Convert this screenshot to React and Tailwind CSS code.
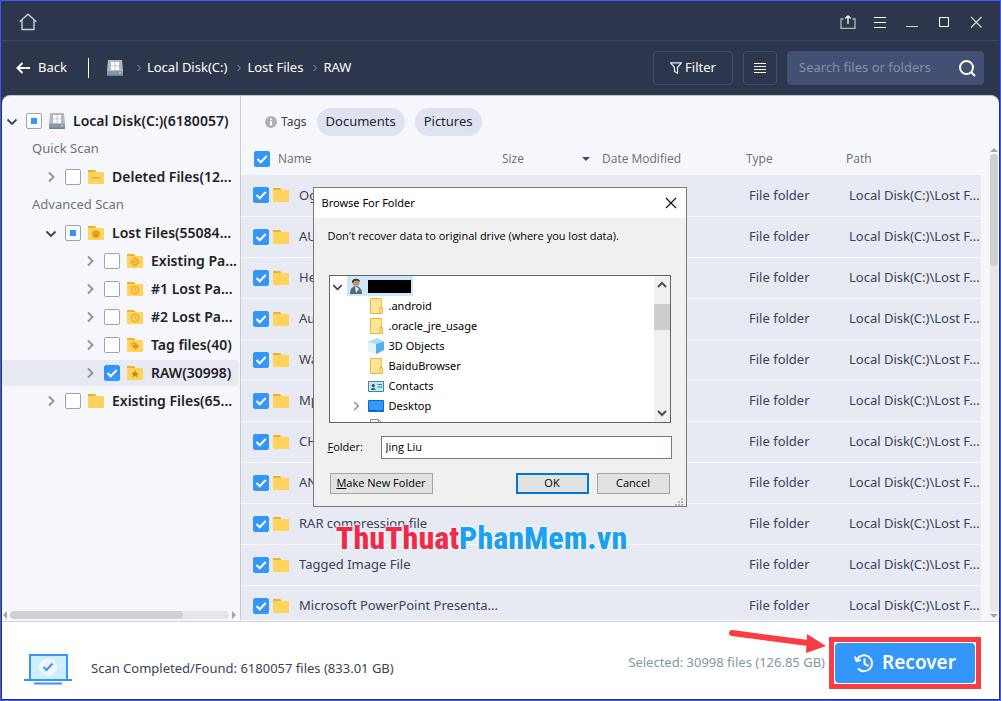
import React, { useState } from 'react';

const treeItems = [
  { label: 'Local Disk(C:)(6180057)', level: 0, open: true, state: 'partial', icon: 'disk' },
  { section: 'Quick Scan' },
  { label: 'Deleted Files(12...', level: 1, state: 'off', icon: 'minus' },
  { section: 'Advanced Scan' },
  { label: 'Lost Files(55084...', level: 1, open: true, state: 'partial', icon: 'smile' },
  { label: 'Existing Pa...', level: 2, state: 'off', icon: 'target' },
  { label: '#1 Lost Pa...', level: 2, state: 'off', icon: 'clock' },
  { label: '#2 Lost Pa...', level: 2, state: 'off', icon: 'clock' },
  { label: 'Tag files(40)', level: 2, state: 'off', icon: 'tag' },
  { label: 'RAW(30998)', level: 2, state: 'on', icon: 'star', active: true },
  { label: 'Existing Files(65...', level: 1, state: 'off', icon: 'plain' },
];

const files = [
  'Ogg', 'AU', 'Help', 'Au', 'Wav', 'Mp3', 'CHM', 'ANI',
  'RAR compression file', 'Tagged Image File', 'Microsoft PowerPoint Presenta...',
];

const folders = [
  { name: '.android', icon: 'folder' },
  { name: '.oracle_jre_usage', icon: 'folder' },
  { name: '3D Objects', icon: 'cube' },
  { name: 'BaiduBrowser', icon: 'folder' },
  { name: 'Contacts', icon: 'contacts' },
  { name: 'Desktop', icon: 'desktop', expandable: true },
  { name: 'Documents', icon: 'doc' },
];

const indent = ['pl-[2px]', 'pl-[41px]', 'pl-[80px]'];

const Tick = ({ state, label }) => {
  const [value, setValue] = useState(state);
  return (
    <span className="grid size-4 shrink-0">
      <input
        type="checkbox"
        aria-label={label}
        checked={value === 'on'}
        onChange={() => setValue(value === 'on' ? 'off' : 'on')}
        className="col-start-1 row-start-1 size-4 appearance-none rounded-[2px] border border-[#a0a3a9] bg-white checked:border-[#3296fa] checked:bg-[#3296fa]"
      />
      <svg viewBox="0 0 16 16" className="pointer-events-none col-start-1 row-start-1 size-4">
        {value === 'on' && <path d="M3.5 8l3.2 3.2 6-6.2" fill="none" stroke="#fff" strokeWidth="2" />}
        {value === 'partial' && <rect x="5" y="5" width="6" height="6" fill="#3296fa" />}
      </svg>
    </span>
  );
};

const Chevron = ({ open, className }) => (
  <svg viewBox="0 0 16 16" className={className} fill="none" strokeWidth="1.8">
    {open ? <path d="M3.5 6.5L8 11l4.5-4.5" stroke="#3b4256" /> : <path d="M6 3.5L10.5 8 6 12.5" stroke="#8f9297" />}
  </svg>
);

const Disk = () => (
  <svg viewBox="0 0 16 16" className="size-4 shrink-0">
    <path d="M1 0h14l1 11H0z" fill="#b4b8be" />
    <path d="M0 11h16v5H0z" fill="#8699a8" />
    <path d="M0 14.5h16V16H0z" fill="#6d8294" />
    <path d="M4 2h3.6v3.5H4zM8.4 2H12v3.5H8.4zM4 6.3h3.6V10H4zM8.4 6.3H12V10H8.4z" fill="#fff" />
    <path d="M12 12.5h2v1h-2z" fill="#bfe6f5" />
  </svg>
);

const Folder = ({ mark }) => (
  <svg viewBox="0 0 16 16" className="size-4 shrink-0" fill="none" stroke="#e2a51c">
    <path d="M0 1h7l1.5 2H15v4H0z" fill="#f0b323" stroke="none" />
    <rect y="3" width="16" height="12" rx="0.6" fill="#ffd35c" stroke="none" />
    {mark === 'minus' && <path d="M4 8.8h8" stroke="#b5892a" strokeDasharray="2 0.6" />}
    {mark === 'smile' && <><circle cx="8" cy="9" r="3.6" fill="#e9ad27" /><path d="M6.5 8h.8M9 8h.8M6.5 10.3q1.5 1 3 0" stroke="#a8791a" /></>}
    {mark === 'target' && <><path d="M8 4.3L12.7 9 8 13.7 3.3 9z" /><circle cx="8" cy="9" r="2.6" /><circle cx="8" cy="9" r="0.7" fill="#e2a51c" /></>}
    {mark === 'clock' && <><circle cx="8" cy="9" r="4" /><path d="M8 6.5V9l2 1.4" /></>}
    {mark === 'tag' && <><path d="M5 6h3.5l3.3 3.4-3 3L5 9z" fill="#dca01d" /><circle cx="6.6" cy="7.4" r="0.6" fill="#fff0b8" stroke="none" /></>}
    {mark === 'star' && <path d="M8 5l1.2 2.7 2.9.2-2.2 1.9.8 2.9L8 11.1l-2.7 1.6.8-2.9-2.2-1.9 2.9-.2z" fill="#c58c17" stroke="none" />}
  </svg>
);

const ShellIcon = ({ icon }) => (
  <svg viewBox="0 0 16 16" className="size-4 shrink-0">
    {icon === 'folder' && <><path d="M2.5.5h10.8v15H2.5z" fill="#ffe597" stroke="#f0b23e" /><path d="M12 9.5h2.5v6H12z" fill="#ffe597" stroke="#f0b23e" /></>}
    {icon === 'cube' && <><path d="M0 3.5L9 0l7 3v9l-7 4-9-3z" fill="#a8e2f7" /><path d="M0 4l8 2v10l-8-3.5z" fill="#e3f3fb" /><path d="M8 6l8-2.5V12l-8 4z" fill="#58aee8" /></>}
    {icon === 'contacts' && <><path d="M.5 3.5h15v10H.5z" fill="#b8ecf8" stroke="#5c7f94" /><path d="M3 12c0-3 4.5-3 4.5 0z" fill="#3a5c78" /><circle cx="5.3" cy="7.5" r="1.6" fill="#4a4038" /><path d="M9.5 6.5H14M9.5 9H14" stroke="#2d7fb8" /></>}
    {icon === 'desktop' && <><path d="M.5 2.5h15v11H.5z" fill="#3399ff" stroke="#0b6cc4" /><path d="M1 12.5h14" stroke="#1559a0" strokeDasharray="8 1 1 1" /></>}
    {icon === 'doc' && <><path d="M2.5 1.5h8l3 3v11h-11z" fill="#f6f8fa" stroke="#8b9299" /><path d="M5 4h4v3H5z" fill="#5aa5d8" /><path d="M10.5 1.5v3h3" fill="none" stroke="#8b9299" /></>}
  </svg>
);

const TitleBar = () => (
  <div className="flex h-10 shrink-0 items-center justify-between border-b border-[#3d465c] pl-[17px] pr-[15px] pt-[2px] text-white">
    <button aria-label="Home">
      <svg viewBox="0 0 18 18" className="size-[18px]" fill="none" stroke="#cfd2d8" strokeWidth="1.4">
        <path d="M.7 8.8L9 1.2l8.3 7.6M3 7v9.500h12V7" />
      </svg>
    </button>
    <div className="flex items-center gap-4">
      <button aria-label="Export">
        <svg viewBox="0 0 16 16" className="size-4" fill="none" stroke="#a9bccb" strokeWidth="1.3">
          <path d="M3.5 5H1v9.300h14V5h-2.500" />
          <path d="M8 10V2M5.3 4.500L8 1.800l2.700 2.700" stroke="#fff" />
        </svg>
      </button>
      <button aria-label="Menu">
        <svg viewBox="0 0 16 16" className="size-4" stroke="#fff">
          <path d="M2 3.500h12M2 8.500h12M2 13.500h12" />
        </svg>
      </button>
      <button aria-label="Minimize">
        <svg viewBox="0 0 16 16" className="size-4" stroke="#d5d7dc">
          <path d="M2 12.500h12" />
        </svg>
      </button>
      <button aria-label="Maximize">
        <svg viewBox="0 0 16 16" className="size-4" fill="none" stroke="#fff">
          <path d="M3.500 3.500h9v9h-9z" />
        </svg>
      </button>
      <button aria-label="Close">
        <svg viewBox="0 0 16 16" className="size-4" stroke="#d5d7dc" strokeWidth="1.2">
          <path d="M3 3l10.500 10.500M13.500 3L3 13.500" />
        </svg>
      </button>
    </div>
  </div>
);

const CrumbArrow = () => (
  <svg viewBox="0 0 8 8" className="ml-2 mr-1 size-2" fill="none" stroke="#8c97ad">
    <path d="M2.500 1l3 3-3 3" />
  </svg>
);

const Toolbar = () => (
  <div className="flex h-[54px] shrink-0 items-center justify-between pl-[14px] pr-[15px] text-white">
    <div className="flex items-center">
      <button className="flex items-center gap-2">
        <svg viewBox="0 0 14 12" className="h-3 w-[14px]" fill="none" stroke="#fff" strokeWidth="2">
          <path d="M14 6H1.500M6.500 1l-5 5 5 5" />
        </svg>
        Back
      </button>
      <span className="ml-[21px] mr-[18px] h-5 w-px bg-white" />
      <Disk />
      <nav className="ml-1 flex items-center">
        <CrumbArrow />
        <a href="#disk">Local Disk(C:)</a>
        <CrumbArrow />
        <a href="#lost">Lost Files</a>
        <CrumbArrow />
        <a href="#raw">RAW</a>
      </nav>
    </div>
    <div className="flex gap-[10px]">
      <button className="flex h-[34px] w-20 items-center justify-center gap-[3px] rounded border border-[#414e70]">
        <svg viewBox="0 0 12 12" className="size-3" fill="none" stroke="#e8eaf0" strokeWidth="1.2">
          <path d="M.7.8h10.6L7.500 5.500v5.700L4.500 9.500v-4z" />
        </svg>
        Filter
      </button>
      <button aria-label="List view" className="flex h-[34px] w-[34px] items-center justify-center rounded border border-[#414e70]">
        <svg viewBox="0 0 12 12" className="size-3" stroke="#fff">
          <path d="M0 1.500h12M0 4.500h12M0 7.500h12M0 10.500h12" />
        </svg>
      </button>
      <div className="flex h-[34px] w-[197px] items-center rounded bg-[#435073] pl-3 pr-2">
        <input aria-label="Search" placeholder="Search files or folders" className="min-w-0 flex-1 bg-transparent outline-none placeholder:text-[#7f92ad]" />
        <svg viewBox="0 0 18 18" className="size-[18px] shrink-0" fill="none" stroke="#fff" strokeWidth="2">
          <circle cx="8.500" cy="8.500" r="6.500" />
          <path d="M13 13l4 4" />
        </svg>
      </div>
    </div>
  </div>
);

const Sidebar = () => (
  <aside className="flex w-[239px] shrink-0 flex-col border-r border-[#c9ccd3] pt-[11px]">
    <ul className="flex flex-1 flex-col">
      {treeItems.map((item, idx) => item.section ? (
        <li key={idx} className="my-px flex h-[26px] items-center pl-[30px] text-[#6f7478]">{item.section}</li>
      ) : (
        <li key={idx} className={`my-px mr-px flex h-[26px] items-center rounded ${indent[item.level]} ${item.active ? 'bg-[#e7e9f3]' : ''}`}>
          <Chevron open={item.open} className="mr-[6px] size-4 shrink-0" />
          <Tick state={item.state} label={item.label} />
          <span className="ml-[7px] mr-2">{item.icon === 'disk' ? <Disk /> : <Folder mark={item.icon} />}</span>
          <span className="whitespace-nowrap text-sm font-semibold text-[#1f2124]">{item.label}</span>
        </li>
      ))}
    </ul>
    <div className="flex h-[11px] items-center pr-[3px]">
      <svg viewBox="0 0 8 8" className="size-2"><path d="M5 0v8L1 4z" fill="#a3a5a9" /></svg>
      <div className="flex h-2 flex-1 rounded-full bg-[#e6e6e8]">
        <div className="w-[79%] rounded-full bg-[#cfd0d2]" />
      </div>
      <svg viewBox="0 0 8 8" className="size-2"><path d="M3 0v8l4-4z" fill="#a3a5a9" /></svg>
    </div>
  </aside>
);

const FileTable = () => (
  <table className="w-full table-fixed border-collapse text-left">
    <colgroup>
      <col />
      <col className="w-[100px]" />
      <col className="w-[144px]" />
      <col className="w-[100px]" />
      <col className="w-[138px]" />
    </colgroup>
    <thead>
      <tr className="h-[33px] font-['Open_Sans',sans-serif] text-xs text-[#6a706f]">
        <th className="font-normal">
          <div className="flex items-center gap-2 pl-[13px]"><Tick state="on" label="Select all" />Name</div>
        </th>
        <th className="px-[3px] font-normal">
          <div className="flex items-center justify-between pr-[6px]">
            Size
            <svg viewBox="0 0 8 4" className="h-1 w-2"><path d="M0 0h8L4 4z" fill="#3d4870" /></svg>
          </div>
        </th>
        <th className="px-[3px] font-normal">Date Modified</th>
        <th className="px-[3px] font-normal">Type</th>
        <th className="px-[3px] font-normal">Path</th>
      </tr>
    </thead>
    <tbody>
      {files.map((name) => (
        <tr key={name} className="h-[41px] border-b border-[#f5f7fc] bg-[#e7e9f3] text-[#3b4256]">
          <td>
            <div className="flex items-center whitespace-nowrap pl-3">
              <Tick state="on" label={name} />
              <span className="ml-1 mr-[10px]"><Folder /></span>
              {name}
            </div>
          </td>
          <td />
          <td />
          <td className="whitespace-nowrap px-[6px]">File folder</td>
          <td className="whitespace-nowrap pl-[6px]">Local Disk(C:)\Lost F...</td>
        </tr>
      ))}
    </tbody>
  </table>
);

const VerticalScroll = () => (
  <div className="flex w-2 flex-col items-center pt-[50px]">
    <svg viewBox="0 0 8 8" className="size-2"><path d="M0 6h8L4 2z" fill="#a3a5a9" /></svg>
    <div className="w-2 flex-1 rounded-full bg-[#e6e6e8]">
      <div className="h-[112px] rounded-full bg-[#cfd0d2]" />
    </div>
    <svg viewBox="0 0 8 8" className="size-2"><path d="M0 2h8L4 6z" fill="#a3a5a9" /></svg>
  </div>
);

const Footer = () => (
  <footer className="relative flex h-[78px] shrink-0 items-center justify-between border-t border-[#cfd2d8] bg-white pl-[22px] pr-[18px]">
    <div className="flex items-center gap-[19px] pt-4 text-[#3b4256]">
      <svg viewBox="0 0 48 32" className="h-8 w-12" fill="none" stroke="#3296fa" strokeWidth="2">
        <path d="M6 26V2h37v24" fill="#cdeefb" />
        <path d="M0 27h48M10 30.500h28" />
        <circle cx="24" cy="14" r="9" fill="#f1f6fc" stroke="none" />
        <path d="M19.500 14l3 3 6-6.500" />
      </svg>
      Scan Completed/Found: 6180057 files (833.01 GB)
    </div>
    <div className="flex items-center gap-1 pt-1">
      <span className="text-[#7b9aa6]">Selected: 30998 files (126.85 GB)</span>
      <div className="border-[5px] border-[#fb3c42] p-px">
        <button className="flex h-10 w-[140px] items-center justify-center gap-2 rounded bg-[#3296fa] text-[19px] font-semibold text-white">
          <svg viewBox="0 0 20 20" className="size-5" fill="none" stroke="#fff" strokeWidth="2">
            <path d="M3 6.500A8 8 0 1 1 4 15.500M1 3.500l1.500 4.500L7 7M10.500 5.500V11l4 2" />
          </svg>
          Recover
        </button>
      </div>
    </div>
    <svg viewBox="0 0 98 28" className="absolute right-[173px] top-1 h-7 w-[98px]">
      <path d="M4 7l76 10" stroke="#fb3c42" strokeWidth="6" strokeLinecap="round" />
      <path d="M79 8l19 12-20 7z" fill="#fb3c42" />
    </svg>
  </footer>
);

const BrowseDialog = () => {
  const [folder, setFolder] = useState('Jing Liu');
  return (
    <div role="dialog" aria-label="Browse For Folder" className="flex w-[374px] flex-col border border-[#84757c] bg-[#f0f0f0] font-['Open_Sans',sans-serif] text-[11px] text-black">
      <div className="flex h-[30px] items-center justify-between bg-white pl-2 pr-[9px] font-['Noto_Sans',sans-serif]">
        Browse For Folder
        <button aria-label="Close dialog">
          <svg viewBox="0 0 12 12" className="size-3" stroke="#111" strokeWidth="1.2"><path d="M1 1l10 10M11 1L1 11" /></svg>
        </button>
      </div>
      <p className="h-[57px] px-[14px] pt-[10px] leading-4">Don't recover data to original drive (where you lost data).</p>
      <div className="mx-[15px] flex h-[148px] overflow-hidden border border-[#646464] bg-white font-['Noto_Sans',sans-serif]">
        <ul className="flex-1 overflow-hidden">
          <li className="flex h-5 items-center">
            <Chevron open className="size-[15px]" />
            <span className="ml-[2px] flex h-5 items-center gap-[5px] bg-[#cce8f8] px-[2px]">
              <svg viewBox="0 0 14 16" className="h-4 w-[14px]">
                <path d="M1 16c0-6 3-8 6-8s6 3 6 8z" fill="#54687a" />
                <path d="M6 8l4 3-3 4z" fill="#e9eef2" />
                <circle cx="7" cy="4.500" r="3.500" fill="#c9905e" />
                <path d="M3 4.500C2 0 11-1 11 4 8 2 5 2 4 5z" fill="#33343a" />
              </svg>
              <span className="h-[13px] w-[43px] bg-black" />
            </span>
          </li>
          {folders.map((item) => (
            <li key={item.name} className="flex h-5 items-center gap-[5px] pl-[19px]">
              <span className="size-[14px]">{item.expandable && <Chevron className="size-[14px]" />}</span>
              <ShellIcon icon={item.icon} />
              {item.name}
            </li>
          ))}
        </ul>
        <div className="flex w-4 flex-col items-center justify-between bg-[#f0f0f0] py-1">
          <svg viewBox="0 0 10 10" className="size-[10px]" fill="none" stroke="#505050" strokeWidth="2"><path d="M1 7l4-4 4 4" /></svg>
          <span className="mb-16 h-[26px] w-4 bg-[#cdcdcd]" />
          <svg viewBox="0 0 10 10" className="size-[10px]" fill="none" stroke="#505050" strokeWidth="2"><path d="M1 3l4 4 4-4" /></svg>
        </div>
      </div>
      <div className="mt-[13px] flex items-center pl-[14px] pr-[14px]">
        <label htmlFor="folder" className="w-[53px]"><u>F</u>older:</label>
        <input
          id="folder"
          value={folder}
          onChange={(e) => setFolder(e.target.value)}
          className="h-[23px] min-w-0 flex-1 border border-[#84757c] bg-white px-1 pb-[2px] outline-none"
        />
      </div>
      <div className="mb-1 mt-[14px] flex gap-2 pl-4 pr-4">
        <button className="mr-auto h-[21px] w-[103px] border border-[#a5a5a5] bg-[#e2e2e2]"><u>M</u>ake New Folder</button>
        <button className="h-[21px] w-[73px] border-2 border-[#0078d7] bg-[#e2e2e2]">OK</button>
        <button className="h-[21px] w-[73px] border border-[#a5a5a5] bg-[#e2e2e2]">Cancel</button>
      </div>
      <svg viewBox="0 0 8 8" className="mr-[3px] size-2 self-end" fill="#b9b9b9">
        <path d="M6 0h2v2H6zM3 3h2v2H3zM6 3h2v2H6zM0 6h2v2H0zM3 6h2v2H3zM6 6h2v2H6z" />
      </svg>
    </div>
  );
};

const App = () => (
  <div className="relative flex h-screen flex-col overflow-hidden border border-[#3b5bff] bg-[#2d364c] px-px pb-px font-['Noto_Sans',sans-serif] text-[13px]">
    <TitleBar />
    <Toolbar />
    <main className="flex min-h-0 flex-1 overflow-hidden rounded-t-lg border-t border-[#c3c6cd] bg-[#f5f7fc] pb-px">
      <Sidebar />
      <section className="min-w-0 flex-1 overflow-hidden">
        <div className="flex h-[46px] items-end gap-[10px] pb-[6px] pl-6">
          <span className="flex h-7 items-center gap-1 text-xs text-[#3b3f46]">
            <svg viewBox="0 0 12 12" className="size-3">
              <circle cx="6" cy="6" r="6" fill="#aeb1b6" />
              <path d="M5 2.500h2v1.500H5zM5 5h2v4.500H5z" fill="#fff" />
            </svg>
            Tags
          </span>
          <button className="h-7 rounded-full bg-[#dfe3f1] px-[9px] text-[#23252b]">Documents</button>
          <button className="h-7 rounded-full bg-[#dfe3f1] px-[9px] text-[#23252b]">Pictures</button>
        </div>
        <FileTable />
      </section>
      <div className="flex w-[18px] pl-[9px]">
        <VerticalScroll />
      </div>
    </main>
    <Footer />

    {/* Watermark */}
    <div className="pointer-events-none absolute inset-x-0 top-[517px] flex justify-center pr-[38px] font-['Roboto_Condensed','Roboto',sans-serif] text-[32px] font-extrabold leading-10 [text-shadow:0_0_2px_#fff,0_0_2px_#fff,0_0_3px_#fff]">
      <span className="text-[#f22a4a]">ThuThuat</span>
      <span className="text-[#1ba0f3]">PhanMem.vn</span>
    </div>

    <div className="absolute inset-0 flex items-center justify-center pb-[7px] pr-[2px]">
      <BrowseDialog />
    </div>
  </div>
);

export default App;
